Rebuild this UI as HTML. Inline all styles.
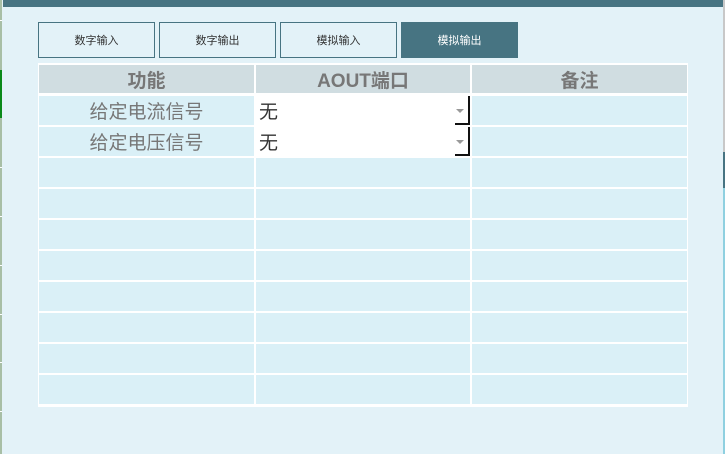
<!DOCTYPE html>
<html><head><meta charset="utf-8"><style>
body{margin:0;width:725px;height:454px;background:#e3f2f8;position:relative;overflow:hidden;font-family:"Liberation Sans","Noto Sans CJK SC",sans-serif;}
.a{position:absolute;box-sizing:border-box;}
.btn{top:22px;height:36px;width:117px;border:1px solid #477482;font-size:11px;color:#333;display:flex;align-items:center;justify-content:center;}
.c{background:#daf0f7;height:29px;}
.h{background:#d0dde1;height:28px;color:#777;font-weight:bold;font-size:19px;display:flex;align-items:center;justify-content:center;}
.t{color:#777;font-size:19px;display:flex;align-items:center;justify-content:center;}
.sel{background:#fff;font-size:19px;color:#333;padding-left:3px;display:flex;align-items:center;}
.sel .r{position:absolute;right:0;top:0;width:2px;height:100%;background:#111;}
.sel .b{position:absolute;right:0;bottom:0;width:15px;height:2px;background:#111;}
.arr{position:absolute;right:6px;top:13px;width:0;height:0;border-left:4px solid transparent;border-right:4px solid transparent;border-top:4px solid #999;}
</style></head><body>
<div class="a" style="left:0;top:0;width:2px;height:454px;background:#a8bfa6"></div>
<div class="a" style="left:0;top:70px;width:2px;height:48px;background:#0a8a1a"></div>
<div class="a" style="left:0;top:20px;width:2px;height:1px;background:#fff"></div>
<div class="a" style="left:0;top:167px;width:2px;height:1px;background:#fff"></div>
<div class="a" style="left:0;top:216px;width:2px;height:1px;background:#fff"></div>
<div class="a" style="left:0;top:265px;width:2px;height:1px;background:#fff"></div>
<div class="a" style="left:0;top:314px;width:2px;height:1px;background:#fff"></div>
<div class="a" style="left:0;top:362px;width:2px;height:1px;background:#fff"></div>
<div class="a" style="left:0;top:411px;width:2px;height:1px;background:#fff"></div>
<div class="a" style="left:3px;top:0;width:720px;height:7px;background:#477482"></div>
<div class="a" style="left:723px;top:0;width:2px;height:152px;background:#c8c8c8"></div>
<div class="a" style="left:723px;top:152px;width:2px;height:36px;background:#477482"></div>
<div class="a" style="left:723px;top:188px;width:2px;height:266px;background:#8fd0e0"></div>

<div class="a btn" style="left:38px">数字输入</div>
<div class="a btn" style="left:159px">数字输出</div>
<div class="a btn" style="left:280px">模拟输入</div>
<div class="a btn" style="left:401px;background:#477482;color:#fff;border-color:#477482">模拟输出</div>

<div class="a" style="left:38px;top:63px;width:650px;height:344px;background:#fff"></div>
<div class="a h" style="left:39px;top:65px;width:215px">功能</div>
<div class="a h" style="left:256px;top:65px;width:214px">AOUT端口</div>
<div class="a h" style="left:472px;top:65px;width:215px">备注</div>
<div id="rows"></div>
<script>
var s='';for(var i=0;i<10;i++){var y=96+31*i;
s+='<div class="a c" style="left:39px;top:'+y+'px;width:215px"></div><div class="a c" style="left:256px;top:'+y+'px;width:214px"></div><div class="a c" style="left:472px;top:'+y+'px;width:215px"></div>';}
document.getElementById('rows').innerHTML=s;
</script>
<div class="a t" style="left:39px;top:96px;width:215px;height:29px">给定电流信号</div>
<div class="a t" style="left:39px;top:127px;width:215px;height:29px">给定电压信号</div>
<div class="a sel" style="left:256px;top:96px;width:214px;height:29px">无<span class="arr"></span><span class="r"></span><span class="b"></span></div>
<div class="a sel" style="left:256px;top:127px;width:214px;height:29px">无<span class="arr"></span><span class="r"></span><span class="b"></span></div>
</body></html>
